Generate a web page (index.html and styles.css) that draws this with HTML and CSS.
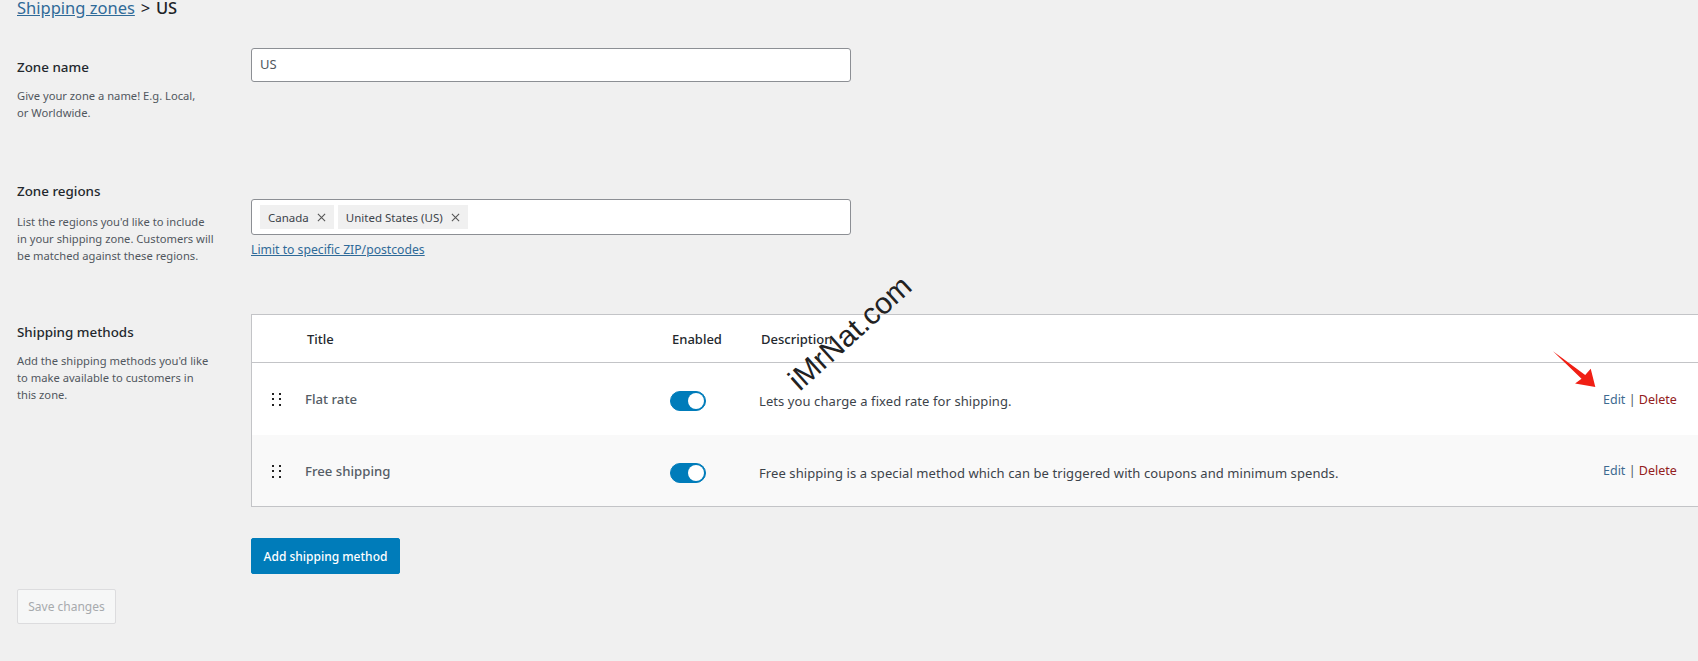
FILE: index.html
```html
<!DOCTYPE html>
<html lang="en">
<head>
<meta charset="utf-8">
<title>Shipping zones - US</title>
<link rel="stylesheet" href="styles.css">
</head>
<body>
<main class="page">
  <h2 class="crumb"><a href="#" class="crumb-link">Shipping zones</a> <span class="crumb-sep">&gt;</span> US</h2>

  <section class="row row-name">
    <div class="side">
      <h3 class="side-title">Zone name</h3>
      <p class="side-desc">Give your zone a name! E.g. Local,<br>or Worldwide.</p>
    </div>
    <div class="main">
      <div class="field field-name">US</div>
    </div>
  </section>

  <section class="row row-regions">
    <div class="side">
      <h3 class="side-title">Zone regions</h3>
      <p class="side-desc">List the regions you'd like to include<br>in your shipping zone. Customers will<br>be matched against these regions.</p>
    </div>
    <div class="main">
      <div class="field field-regions">
        <span class="chip">Canada <svg class="chip-x" viewBox="0 0 10 10"><path d="M1 1l8 8M9 1l-8 8"/></svg></span>
        <span class="chip">United States (US) <svg class="chip-x" viewBox="0 0 10 10"><path d="M1 1l8 8M9 1l-8 8"/></svg></span>
      </div>
      <a href="#" class="limit">Limit to specific ZIP/postcodes</a>
    </div>
  </section>

  <section class="row row-methods">
    <div class="side">
      <h3 class="side-title">Shipping methods</h3>
      <p class="side-desc">Add the shipping methods you'd like<br>to make available to customers in<br>this zone.</p>
    </div>
    <div class="main">
      <div class="table">
        <div class="thead">
          <span class="th-title">Title</span>
          <span class="th-enabled">Enabled</span>
          <span class="th-desc">Description</span>
        </div>
        <div class="tr">
          <svg class="drag" viewBox="0 0 9 14"><path d="M0 1h2v2H0zM7 1h2v2H7zM0 6h2v2H0zM7 6h2v2H7zM0 12h2v2H0zM7 12h2v2H7z"/></svg>
          <span class="name">Flat rate</span>
          <span class="toggle"><span class="knob"></span></span>
          <span class="desc">Lets you charge a fixed rate for shipping.</span>
          <span class="actions"><a href="#" class="edit">Edit</a> | <a href="#" class="delete">Delete</a></span>
        </div>
        <div class="tr tr-alt">
          <svg class="drag" viewBox="0 0 9 14"><path d="M0 1h2v2H0zM7 1h2v2H7zM0 6h2v2H0zM7 6h2v2H7zM0 12h2v2H0zM7 12h2v2H7z"/></svg>
          <span class="name">Free shipping</span>
          <span class="toggle"><span class="knob"></span></span>
          <span class="desc">Free shipping is a special method which can be triggered with coupons and minimum spends.</span>
          <span class="actions"><a href="#" class="edit">Edit</a> | <a href="#" class="delete">Delete</a></span>
        </div>
      </div>
      <button type="button" class="btn-add">Add shipping method</button>
    </div>
  </section>

  <button type="button" class="btn-save" disabled>Save changes</button>
</main>

<div class="watermark">iMrNat.com</div>
<svg class="arrow" viewBox="0 0 50 42"><path d="M0 0L35 26L41 19L46 39L24 35L31 30Z"/></svg>
</body>
</html>
```
FILE: styles.css
```css
* { box-sizing: border-box; }
html, body { margin: 0; padding: 0; }
body {
  background: #f0f0f0;
  color: #2c3338;
  font-family: "Noto Sans", "Open Sans", sans-serif;
  font-size: 12px;
  width: 1698px;
  height: 661px;
  overflow: hidden;
  position: relative;
}
a { color: #2f6a98; }
.page { padding-left: 17px; }

.crumb {
  margin: 0;
  height: 16px;
  font-size: 16.5px;
  line-height: 16px;
  font-weight: 500;
  color: #1d2327;
  word-spacing: 1.5px;
}
.crumb-link { font-weight: 400; word-spacing: 0; }
.crumb-sep { font-weight: 400; }

.row { display: grid; grid-template-columns: 234px 1460px; }
.row-name { margin-top: 32px; height: 134px; }
.row-regions { height: 132px; }
.row-methods { height: 275px; }

.side-title {
  margin: 0;
  font-size: 13.4px;
  line-height: 18px;
  font-weight: 500;
  color: #23282d;
}
.side-desc {
  margin: 11px 0 0;
  font-size: 11.2px;
  line-height: 17px;
  color: #50575e;
}
.row-name .side { padding-top: 10px; }
.row-regions .side-desc { margin-top: 13px; }
.row-methods .side { padding-top: 9px; }

.field {
  width: 600px;
  background: #fff;
  border: 1px solid #8c8f94;
  border-radius: 3px;
}
.field-name {
  height: 34px;
  padding: 0 10px 0 8px;
  line-height: 30px;
  font-size: 13px;
  color: #50575e;
}
.field-regions {
  height: 36px;
  margin-top: 17px;
  padding: 5px 8px;
  display: flex;
  gap: 4px;
}
.chip {
  display: flex;
  align-items: center;
  gap: 8px;
  height: 24px;
  padding: 0 8px;
  background: #f0f0f0;
  font-size: 11.5px;
  color: #3c434a;
}
.chip-x { width: 9px; height: 9px; fill: none; stroke: #555; stroke-width: 1.2; }
.limit { display: block; margin-top: 6px; font-size: 12.2px; line-height: 18px; }

.table {
  width: 1460px;
  height: 193px;
  background: #fff;
  border: 1px solid #c3c4c7;
  border-right: 0;
}
.thead {
  height: 48px;
  border-bottom: 1px solid #c3c4c7;
  display: grid;
  grid-template-columns: 55px 365px 89px 1fr;
  align-items: center;
  font-size: 13px;
  font-weight: 500;
  color: #23282d;
}
.th-title { grid-column: 2; }
.th-enabled { grid-column: 3; }
.th-desc { grid-column: 4; }
.tr {
  height: 72px;
  display: grid;
  grid-template-columns: 53px 365px 89px 844px auto;
  align-items: center;
}
.tr-alt { height: 71px; background: #f9f9f9; }
.drag { width: 9px; height: 14px; margin-left: 20px; fill: #222; }
.name { font-size: 13.2px; font-weight: 500; color: #555d66; }
.toggle {
  width: 36px;
  height: 20px;
  margin-top: 4px;
  border-radius: 10px;
  background: #007cba;
  position: relative;
  border: 1px solid #007cba;
}
.knob {
  position: absolute;
  top: 1px;
  right: 1px;
  width: 16px;
  height: 16px;
  border-radius: 50%;
  background: #fff;
}
.desc { margin-top: 4px; font-size: 13px; letter-spacing: 0.085px; color: #3c434a; }
.actions { font-size: 12.5px; color: #50575e; }
.edit { color: #3d6a90; text-decoration: none; }
.delete { color: #932020; text-decoration: none; }

.btn-add {
  display: block;
  margin-top: 31px;
  width: 149px;
  height: 36px;
  background: #007cba;
  border: 1px solid #007cba;
  border-radius: 2px;
  color: #fff;
  font: 500 12px "Noto Sans", sans-serif;
}
.btn-save {
  display: block;
  width: 99px;
  height: 35px;
  background: #f6f7f7;
  border: 1px solid #dcdcde;
  border-radius: 2px;
  color: #a7aaad;
  font: 400 12px "Noto Sans", sans-serif;
}

.watermark {
  position: absolute;
  left: 760px;
  top: 318px;
  width: 180px;
  text-align: center;
  font: 400 30px/1 "Liberation Sans", Arial, sans-serif;
  color: #222;
  transform: rotate(-42deg);
  text-shadow: 0 0 1px #fff;
}
.arrow {
  position: absolute;
  left: 1553px;
  top: 351px;
  width: 46px;
  height: 39px;
  fill: #f01f14;
}
```
